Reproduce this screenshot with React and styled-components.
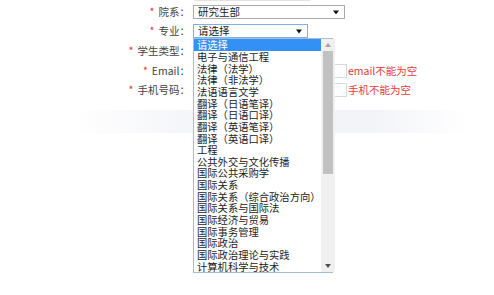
import React from 'react'
import styled, { createGlobalStyle } from 'styled-components'

const majors = [
  '请选择',
  '电子与通信工程',
  '法律（法学）',
  '法律（非法学）',
  '法语语言文学',
  '翻译（日语笔译）',
  '翻译（日语口译）',
  '翻译（英语笔译）',
  '翻译（英语口译）',
  '工程',
  '公共外交与文化传播',
  '国际公共采购学',
  '国际关系',
  '国际关系（综合政治方向）',
  '国际关系与国际法',
  '国际经济与贸易',
  '国际事务管理',
  '国际政治',
  '国际政治理论与实践',
  '计算机科学与技术'
]

const GlobalStyle = createGlobalStyle`
  html, body {
    margin: 0;
    padding: 0;
    background: #fff;
  }
  body {
    font-family: "Noto Sans CJK SC", "Noto Sans", sans-serif;
    font-size: 10.5px;
    color: #333;
  }
`

const Page = styled.div`
  width: 494px;
  height: 295px;
  overflow: hidden;
  position: relative;
`

const TopStub = styled.div`
  width: 116px;
  height: 1px;
  margin-left: 194px;
  background: #e2e2e2;
`

const Form = styled.div`
  padding-top: 1px;
  display: flex;
  flex-direction: column;
`

const Row = styled.div`
  display: flex;
  align-items: center;
  height: 19.6px;
`

const Label = styled.label`
  width: 190px;
  padding-right: 3px;
  text-align: right;
  white-space: nowrap;
  line-height: 14px;
  color: #444;
`

const Star = styled.span`
  color: #e2393c;
  margin-right: 4px;
`

const Select = styled.div`
  position: relative;
  box-sizing: border-box;
  width: ${p => p.$width}px;
  height: 14px;
  border: 1px solid ${p => (p.$focused ? '#7eb0e4' : '#a9a9a9')};
  padding: 0 0 0 4px;
  line-height: 12px;
  color: #222;
  background: #fff;
`

const Arrow = styled.span`
  position: absolute;
  right: 5px;
  top: 4px;
  display: flex;
`

const Field = styled.div`
  display: flex;
  align-items: center;
`

const Input = styled.div`
  box-sizing: border-box;
  width: ${p => p.$width}px;
  height: 14px;
  border: 1px solid #d9d9d9;
  background: #fff;
`

const ErrorText = styled.span`
  color: #e2393c;
  margin-left: 1px;
  white-space: nowrap;
  line-height: 14px;
`

const ListBox = styled.div`
  position: absolute;
  left: -1px;
  top: 13px;
  z-index: 5;
  box-sizing: border-box;
  width: 140px;
  height: 235px;
  border: 1px solid #a7bcd8;
  background: #fff;
  display: flex;
`

const Options = styled.ul`
  list-style: none;
  margin: 0;
  padding: 0;
  flex: 1;
`

const Option = styled.li`
  height: 11.65px;
  line-height: 11.65px;
  padding-left: 3px;
  font-size: 10.3px;
  white-space: nowrap;
  color: ${p => (p.$selected ? '#fff' : '#222')};
  background: ${p => (p.$selected ? '#3391f5' : 'transparent')};
`

const Scrollbar = styled.div`
  width: 14px;
  background: #f0f0f0;
  display: flex;
  flex-direction: column;
  align-items: center;
`

const ScrollBtn = styled.div`
  height: 12px;
  width: 14px;
  display: flex;
  align-items: center;
  justify-content: center;
`

const Thumb = styled.div`
  width: 10px;
  height: 123px;
  background: #c1c1c1;
`

const Track = styled.div`
  flex: 1;
`

const Band = styled.div`
  margin: 10px 0 0 70px;
  width: 400px;
  height: 23px;
  background: linear-gradient(to right, #fff 0%, #f3f4f8 35%, #f3f4f8 75%, #fff 100%);
`

function Tri({ up, color, w = 6, h = 4 }) {
  return (
    <svg width={w} height={h} viewBox="0 0 6 4">
      <path d={up ? 'M0 4 L3 0 L6 4 Z' : 'M0 0 L6 0 L3 4 Z'} fill={color} />
    </svg>
  )
}

export default function App() {
  return (
    <Page>
      <GlobalStyle />
      <TopStub />
      <Form>
        <Row>
          <Label><Star>*</Star>院系：</Label>
          <Select $width={152}>
            研究生部
            <Arrow><Tri color="#111" w={6} h={5} /></Arrow>
          </Select>
        </Row>
        <Row>
          <Label><Star>*</Star>专业：</Label>
          <Select $width={115} $focused>
            请选择
            <Arrow><Tri color="#111" w={6} h={5} /></Arrow>
            <ListBox>
              <Options>
                {majors.map((m, i) => (
                  <Option key={m} $selected={i === 0}>{m}</Option>
                ))}
              </Options>
              <Scrollbar>
                <ScrollBtn><Tri up color="#a3a3a3" /></ScrollBtn>
                <Thumb />
                <Track />
                <ScrollBtn><Tri color="#505050" /></ScrollBtn>
              </Scrollbar>
            </ListBox>
          </Select>
        </Row>
        <Row>
          <Label><Star>*</Star>学生类型：</Label>
          <Field />
        </Row>
        <Row>
          <Label><Star>*</Star>Email：</Label>
          <Field>
            <Input $width={154} />
            <ErrorText>email不能为空</ErrorText>
          </Field>
        </Row>
        <Row>
          <Label><Star>*</Star>手机号码：</Label>
          <Field>
            <Input $width={154} />
            <ErrorText>手机不能为空</ErrorText>
          </Field>
        </Row>
      </Form>
      <Band />
    </Page>
  )
}
